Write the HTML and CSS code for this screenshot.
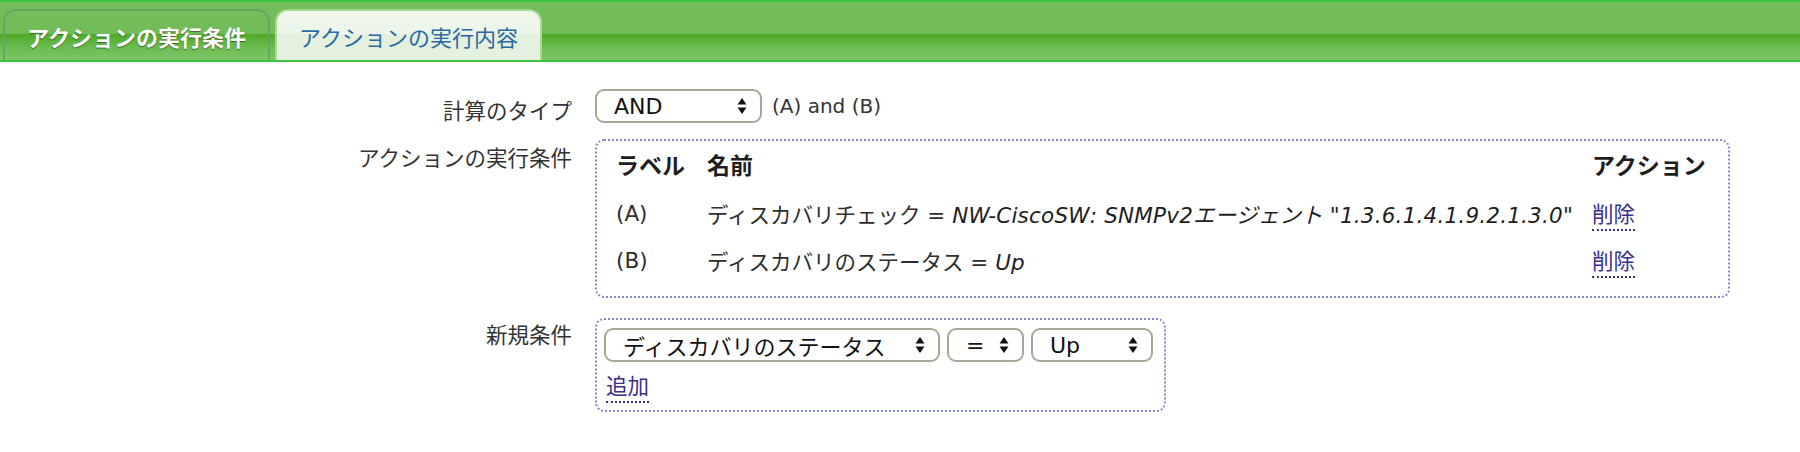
FILE: index.html
```html
<!DOCTYPE html>
<html lang="ja">
<head>
<meta charset="utf-8">
<title>アクション</title>
<link rel="stylesheet" href="styles.css">
</head>
<body>
<div class="tabbar">
  <div class="tab tab-green">アクションの実行条件</div>
  <div class="tab tab-light">アクションの実行内容</div>
</div>

<div class="form">
  <div class="label">計算のタイプ</div>
  <div class="field field-inline">
    <div class="select sel-calc">
      <span>AND</span>
      <svg class="arrows" viewBox="0 0 10 18" width="10" height="18"><polygon points="5,1 9.5,7.5 0.5,7.5"/><polygon points="0.5,10.5 9.5,10.5 5,17"/></svg>
    </div>
    <span class="formula">(A) and (B)</span>
  </div>

  <div class="label label-box">アクションの実行条件</div>
  <div class="field">
    <div class="box box-conditions">
      <table class="cond-table">
        <thead>
          <tr><th class="col-label">ラベル</th><th class="col-name">名前</th><th class="col-action">アクション</th></tr>
        </thead>
        <tbody>
          <tr>
            <td>(A)</td>
            <td>ディスカバリチェック = <em>NW-CiscoSW: SNMPv2エージェント "1.3.6.1.4.1.9.2.1.3.0"</em></td>
            <td><a class="link">削除</a></td>
          </tr>
          <tr>
            <td>(B)</td>
            <td>ディスカバリのステータス = <em>Up</em></td>
            <td><a class="link">削除</a></td>
          </tr>
        </tbody>
      </table>
    </div>
  </div>

  <div class="label">新規条件</div>
  <div class="field">
    <div class="box box-new">
      <div class="select-row">
        <div class="select sel-field">
          <span>ディスカバリのステータス</span>
          <svg class="arrows" viewBox="0 0 10 18" width="10" height="18"><polygon points="5,1 9.5,7.5 0.5,7.5"/><polygon points="0.5,10.5 9.5,10.5 5,17"/></svg>
        </div>
        <div class="select sel-op">
          <span>=</span>
          <svg class="arrows" viewBox="0 0 10 18" width="10" height="18"><polygon points="5,1 9.5,7.5 0.5,7.5"/><polygon points="0.5,10.5 9.5,10.5 5,17"/></svg>
        </div>
        <div class="select sel-val">
          <span>Up</span>
          <svg class="arrows" viewBox="0 0 10 18" width="10" height="18"><polygon points="5,1 9.5,7.5 0.5,7.5"/><polygon points="0.5,10.5 9.5,10.5 5,17"/></svg>
        </div>
      </div>
      <a class="link link-add">追加</a>
    </div>
  </div>
</div>
</body>
</html>
```
FILE: styles.css
```css
html, body {
  margin: 0;
  padding: 0;
  background: #ffffff;
}

body {
  font-family: "DejaVu Sans", "Noto Sans CJK JP", sans-serif;
  font-size: 21.5px;
  color: #2b2b2b;
}

/* ---------- tab bar ---------- */
.tabbar {
  box-sizing: border-box;
  height: 62px;
  display: flex;
  align-items: flex-end;
  gap: 5px;
  padding: 7px 0 0 3px;
  border-top: 2px solid #3ec43e;
  border-bottom: 2px solid #3ec43e;
  background: linear-gradient(to bottom, #74bd5b 0%, #72bb59 55%, #4eaa27 55%, #6bbc52 78%, #7dc667 100%);
}

.tab {
  box-sizing: border-box;
  width: 267px;
  height: 51px;
  display: flex;
  align-items: center;
  justify-content: center;
  border: 2px solid;
  border-bottom: 0;
  border-radius: 13px 13px 0 0;
  font-family: "Noto Sans CJK JP", sans-serif;
  font-size: 22px;
}

.tab-green {
  border-color: #67a566;
  background: linear-gradient(to bottom, #74bd5b 0%, #72bb59 47%, #4eaa27 47%, #6bbc52 75%, #7dc667 100%);
  color: #ffffff;
  font-weight: bold;
  text-shadow: 0 1px 1px rgba(0, 0, 0, 0.45);
}

.tab-light {
  border-color: #a8d992;
  background: linear-gradient(to bottom, #eff7ec 0%, #edf5ea 47%, #e3f0dd 47%, #e6f2e0 100%);
  color: #2a6aa2;
}

/* ---------- form ---------- */
.form {
  display: grid;
  grid-template-columns: 572px auto;
  column-gap: 23px;
  row-gap: 15px;
  margin-top: 27px;
  align-items: start;
}

.label {
  text-align: right;
  line-height: 28px;
  padding-top: 7px;
  font-family: "Noto Sans CJK JP", sans-serif;
  color: #333333;
}

.label-box {
  padding-top: 4px;
}

.field {
  display: flex;
  align-items: flex-start;
}

.field-inline {
  align-items: center;
  gap: 10px;
}

.formula {
  color: #333333;
  font-size: 20px;
}

/* ---------- select ---------- */
.select {
  box-sizing: border-box;
  height: 34px;
  display: flex;
  align-items: center;
  justify-content: space-between;
  padding: 0 13px 0 17px;
  border: 2px solid #aba797;
  border-radius: 9px;
  background: #ffffff;
  color: #111111;
  font-size: 22px;
}

.arrows {
  flex: none;
  fill: #111111;
}

.sel-calc { width: 167px; }
.sel-field { width: 336px; }
.sel-op { width: 77px; }
.sel-val { width: 122px; }

.select-row {
  display: flex;
  gap: 7px;
}

/* ---------- boxes ---------- */
.box {
  box-sizing: border-box;
  border: 2px dotted #7f8cc9;
  border-radius: 9px;
}

.box-conditions {
  width: 1135px;
  padding: 0 18px 12px 19px;
}

.box-new {
  width: 571px;
  padding: 8px 7px 7px 7px;
  margin-top: 5px;
}

/* ---------- table ---------- */
.cond-table {
  width: 100%;
  border-collapse: collapse;
}

.cond-table th,
.cond-table td {
  padding: 0;
  text-align: left;
  vertical-align: middle;
  white-space: nowrap;
}

.cond-table th {
  height: 45px;
  padding-bottom: 4px;
  font-size: 23px;
  font-weight: bold;
  color: #1e1e1e;
}

.cond-table td {
  height: 47px;
  color: #2e2e2e;
}

.col-label { width: 91px; }
.col-action { width: 118px; }

.cond-table em {
  font-style: italic;
  color: #1e1e1e;
  letter-spacing: 0.2px;
}

/* ---------- links ---------- */
.link {
  display: inline-block;
  line-height: 26px;
  padding-top: 4px;
  padding-bottom: 3px;
  border-bottom: 2px dotted #3b3088;
  color: #3b3088;
  font-family: "Noto Sans CJK JP", sans-serif;
  cursor: pointer;
}

.link-add {
  margin-top: 6px;
  margin-left: 2px;
}
```
